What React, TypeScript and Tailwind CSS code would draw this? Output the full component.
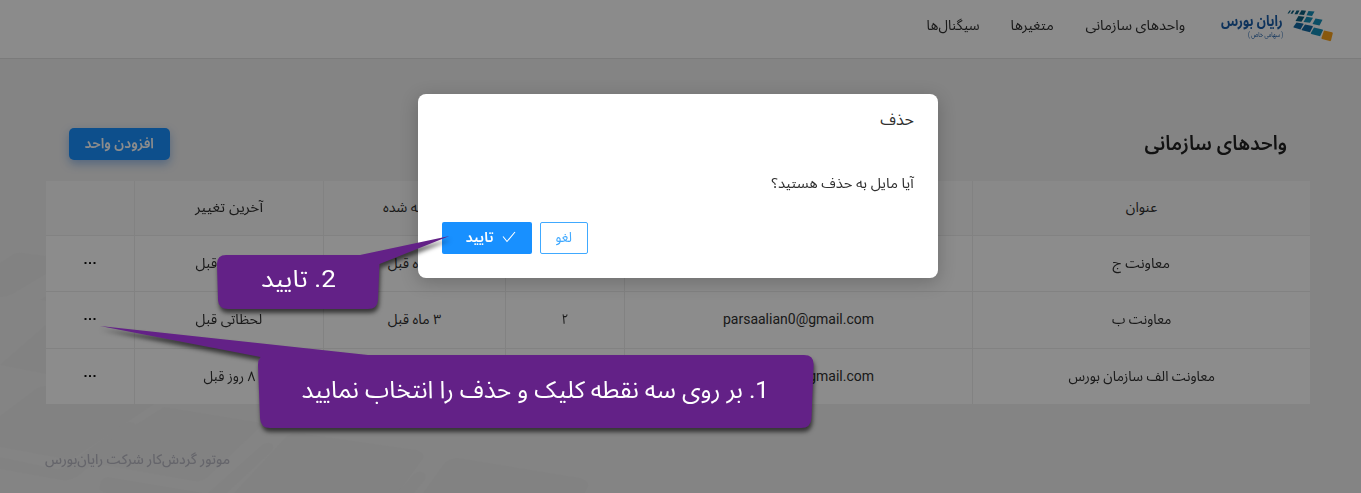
import { useLayoutEffect, useRef, useState } from "react";
import type { ReactNode } from "react";

/* Text run condensed or widened horizontally to an exact advance width. */
function Fit({ w, className = "", children }: { w: number; className?: string; children: ReactNode }) {
  const ref = useRef<HTMLSpanElement>(null);
  const [scale, setScale] = useState(1);
  useLayoutEffect(() => {
    if (ref.current) setScale(w / ref.current.offsetWidth);
  }, [w]);
  return (
    <span className="inline-flex justify-center whitespace-nowrap" style={{ width: w }}>
      <span ref={ref} className={"inline-block shrink-0 " + className} style={{ transform: `scaleX(${scale})` }}>
        {children}
      </span>
    </span>
  );
}

function Logo() {
  return (
    <div className="flex h-[34px] items-start gap-1">
      <svg width="46" height="34" viewBox="0 0 46 34">
        <g fill="#0c6080">
          <path d="M2.500 1.500h1.500l-2 3H.5zM5.500 1.500h2l-2 3.200H3.500zM9.500 1.500h3l-2 3.800h-3z" />
          <path d="M14.500 1.200l4.500.6-2 4.200-5-.6z" />
          <path d="M11.500 7l6 .7-3 5-6-.8z" />
        </g>
        <g fill="#148fb8">
          <path d="M21.500 1.900l6 .6-2.500 4.500-5.500-.8z" />
          <path d="M19.500 7.800l6.500.9-3 5-6.500-.8z" />
          <path d="M28.500 9.500l7 1.200-3 5.800-7-1.400z" />
          <path d="M27 18.500l8.500 2q.6.2.4.8l-2.800 6-8.800-2.200q-.7-.3-.4-1z" />
        </g>
        <g fill="#1268a2">
          <path d="M9.500 13.500l6.500 1q.6.200.4.7L13.500 20.500l-6.800-2q-.4-.2-.2-.8z" />
          <path d="M18 15.500l7.500 1.500q.5.200.3.7l-2.800 5.500-8-2q-.5-.2-.3-.8z" />
        </g>
        <path d="M37 21.500l8 1.700q1 .3.800 1l-1.800 7.200q-.4.900-1.400.7l-7.600-2.200q-.8-.3-.5-1.200z" fill="#f7a11b" />
      </svg>
      <div className="flex flex-col items-start">
        <span className="h-[22px] text-[15px]/[24px] font-bold text-[#1a5da8]"><Fit w={62}>رایان بورس</Fit></span>
        <span className="text-[7px]/[8px] text-[#1a5da8]"><Fit w={35}>( سهامی خاص )</Fit></span>
      </div>
    </div>
  );
}

function Backdrop() {
  return (
    <svg className="absolute inset-0" width="1361" height="493" viewBox="0 0 1361 493" fill="#ededed">
      <path d="M0 263l14-9q4-2 9-1l23 3v18l-32 19q-6 4-14 4z" />
      <path d="M40 300l6-4v5z" />
      <path d="M0 365l46-40v49z" />
      <path d="M0 416l36-27q4-3 10-3v18h108L77 456q-5 4-12 3L0 447z" />
      <path d="M0 457l56 12q6 1 11-3l53-40q8-6 14-3 4 3-2 8l-53 44q-9 7-18 5L0 469z" />
      <path d="M164 407l92 15q7 2 2 7l-50 48q-6 5-14 4l-108-19q-6-2-1-6z" />
      <path d="M108 477l96 16H106q-9-2-6-8 2-8 8-8z" />
      <path d="M262 445q6-4 10-1 3 4-1 8l-44 41h-19z" />
      <path d="M298 433l118 17q11 3 6 10l-24 33H234l50-54q5-6 14-6z" />
      <path d="M414 474q5-4 10-1 4 3 0 8l-10 12h-17z" />
      <path d="M458 458l122 20q10 3 8 9l-3 6H423l20-28q5-7 15-7z" />
    </svg>
  );
}

function Dots() {
  return (
    <svg width="12" height="4" viewBox="0 0 12 4" className="inline-block" fill="#111">
      <rect x="0.500" y="1" width="2" height="2" rx="0.500" />
      <rect x="5" y="1" width="2" height="2" rx="0.500" />
      <rect x="9.500" y="1" width="2" height="2" rx="0.500" />
    </svg>
  );
}

const COLS = "grid grid-cols-[338px_348px_119px_182px_189px_88px]";

function Cell({ children, last }: { children?: ReactNode; last?: boolean }) {
  return (
    <div className={"flex items-center justify-center pb-0.5 " + (last ? "" : "border-l border-[#ededed]")}>{children}</div>
  );
}

export default function App() {
  return (
    <div dir="rtl" className="relative h-[493px] w-[1361px] overflow-hidden bg-[#f0f0f0] font-['Roboto','Noto_Sans_Arabic','DejaVu_Sans',sans-serif] text-sm text-[#303030]">
      <Backdrop />
      <div className="relative flex h-full flex-col">
        <header className="flex h-[59px] items-start border-b border-[#e0e0e0] bg-[#fdfdfd] pr-[28px] pt-[9px]">
          <Logo />
          <nav className="mr-[36px] flex gap-[31px] pt-[5px] text-sm/[22px]">
            <Fit w={100}>واحدهای سازمانی</Fit>
            <Fit w={43}>متغیرها</Fit>
            <Fit w={53}>سیگنال‌ها</Fit>
          </nav>
        </header>
        <div className="flex items-center justify-between pr-[74px] pl-[69px] pt-[69px]">
          <h1 className="pb-0.5 text-[20px]/[30px] font-semibold text-[#222]"><Fit w={142}>واحدهای سازمانی</Fit></h1>
          <button className="flex h-8 w-[101px] items-center justify-center rounded-[5px] bg-[#1890ff] pb-0.5 font-semibold text-white shadow-[0_4px_10px_rgba(24,110,220,0.4)]">
            <Fit w={69}>افزودن واحد</Fit>
          </button>
        </div>
        <div className="mr-[51px] mt-[21px] w-[1264px] bg-white">
          <div className={COLS + " h-[55px] border-b border-[#ededed] bg-[#fafafa]"}>
            <Cell><Fit w={31}>عنوان</Fit></Cell>
            <Cell /><Cell />
            <Cell><Fit w={63}>ساخته شده</Fit></Cell>
            <Cell><Fit w={68}>آخرین تغییر</Fit></Cell>
            <Cell last />
          </div>
          <div className={COLS + " h-[56px] border-b border-[#ededed]"}>
            <Cell><Fit w={57}>معاونت ج</Fit></Cell>
            <Cell /><Cell />
            <Cell><Fit w={53}>۳ ماه قبل</Fit></Cell>
            <Cell><Fit w={67}>لحظاتی قبل</Fit></Cell>
            <Cell last><Dots /></Cell>
          </div>
          <div className={COLS + " h-[57px] border-b border-[#ededed]"}>
            <Cell><Fit w={59}>معاونت ب</Fit></Cell>
            <Cell><Fit w={151}>parsaalian0@gmail.com</Fit></Cell>
            <Cell><Fit w={7}>۲</Fit></Cell>
            <Cell><Fit w={53}>۳ ماه قبل</Fit></Cell>
            <Cell><Fit w={67}>لحظاتی قبل</Fit></Cell>
            <Cell last><Dots /></Cell>
          </div>
          <div className={COLS + " h-[55px]"}>
            <Cell><Fit w={146}>معاونت الف سازمان بورس</Fit></Cell>
            <Cell><Fit w={151}>parsaalian0@gmail.com</Fit></Cell>
            <Cell /><Cell />
            <Cell><Fit w={52}>۸ روز قبل</Fit></Cell>
            <Cell last><Dots /></Cell>
          </div>
        </div>
        <footer className="mt-[44px] flex justify-end pl-[45px] text-sm/[22px] font-medium text-[#b9b9c3]">
          <Fit w={185}>موتور گردش‌کار شرکت رایان‌بورس</Fit>
        </footer>
      </div>

      <div className="absolute inset-0 bg-black/45" />

      <div role="dialog" className="absolute top-[94px] left-[418px] flex h-[184px] w-[520px] flex-col rounded-lg bg-white px-6 pt-[14px] shadow-[0_4px_18px_rgba(0,0,0,0.22)]">
        <div className="text-base/[24px]"><Fit w={34}>حذف</Fit></div>
        <div className="mt-[40px] text-sm/[22px]"><Fit w={142}>آیا مایل به حذف هستید؟</Fit></div>
        <div className="mt-[28px] flex justify-end gap-2">
          <button className="flex h-8 w-12 items-center justify-center rounded-[2px] border border-[#40a9ff] pb-0.5 text-[#40a9ff]"><Fit w={17}>لغو</Fit></button>
          <button className="flex h-8 w-[90px] items-center gap-2 rounded-[2px] bg-[#1890ff] pr-4 pb-0.5 font-semibold text-white">
            <svg width="14" height="12" viewBox="0 0 14 12" fill="none" stroke="white" strokeWidth="1.100"><path d="M1 5.500L5 10.500L13 1" /></svg>
            <Fit w={28}>تایید</Fit>
          </button>
        </div>
      </div>

      <svg className="absolute inset-0 drop-shadow-[1px_4px_2px_rgba(0,0,0,0.6)]" width="1361" height="493" viewBox="0 0 1361 493" fill="#632187">
        <path d="M226 255H360L449.500 236L379.500 264L378 300Q377.500 309 368 309H228Q218.500 309 218 300L217 264Q217 255 226 255Z" />
        <path d="M100 326L368 355H804Q814 355 813.600 365L811.500 418Q811 428 801 428H270Q260.500 428 260 418L258 365Q258 360 260.500 357Z" />
      </svg>
      <div className="absolute top-[261px] left-[261px] text-2xl/[36px] text-white"><Fit w={75}>2. تایید</Fit></div>
      <div className="absolute top-[372px] left-[301px] text-2xl/[36px] text-white"><Fit w={468}>1. بر روی سه نقطه کلیک و حذف را انتخاب نمایید</Fit></div>
    </div>
  );
}
